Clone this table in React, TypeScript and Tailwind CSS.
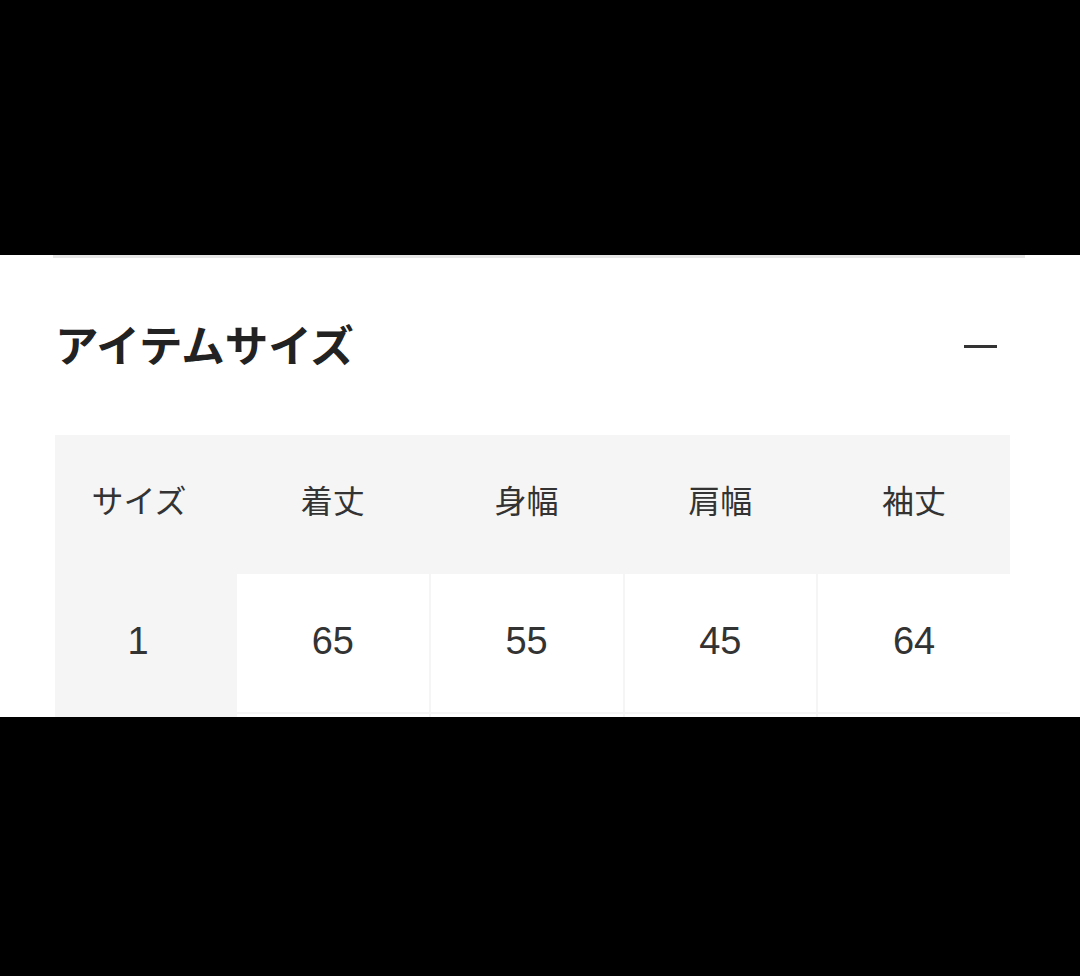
const headers = ["着丈", "身幅", "肩幅", "袖丈"];
const rows = [{ size: "1", values: ["65", "55", "45", "64"] }];

const jp = "font-['Noto_Sans_CJK_JP','Noto_Sans',sans-serif]";

export default function App() {
  return (
    <div className="min-h-[976px] w-[1080px] bg-black">
      <div className="h-[255px]" />

      <section className="h-[462px] overflow-hidden bg-white">
        <div className="ml-[53px] h-[3px] w-[972px] bg-[#e6e6e6]" />

        <div className="ml-[55px] mr-[70px] mt-[64px] flex items-center justify-between">
          <h2 className={`${jp} text-[43.5px] font-bold leading-[44px] text-[#222]`}>
            アイテムサイズ
          </h2>
          <span className="mr-[13px] mt-[5px] block h-[3px] w-[33px] bg-[#333]" />
        </div>

        <div className="ml-[55px] mt-[69px] w-[955px] bg-[#f5f5f5]">
          <div className="grid h-[139px] grid-cols-[180px_repeat(4,1fr)] items-center gap-x-[2px] pb-[12px]">
            <div className={`${jp} pr-[12px] text-center text-[32px] text-[#333]`}>
              サイズ
            </div>
            {headers.map((h) => (
              <div
                key={h}
                className={`${jp} text-center text-[32px] text-[#333]`}
              >
                {h}
              </div>
            ))}
          </div>

          {rows.map((r) => (
            <div
              key={r.size}
              className="mb-[2px] grid h-[138px] grid-cols-[180px_repeat(4,1fr)] gap-x-[2px]"
            >
              <div className="flex items-center justify-center pb-[4px] pr-[14px] font-['Liberation_Sans',sans-serif] text-[38px] text-[#333]">
                {r.size}
              </div>
              {r.values.map((v, i) => (
                <div
                  key={i}
                  className="flex items-center justify-center bg-white pb-[4px] font-['Liberation_Sans',sans-serif] text-[38px] text-[#333]"
                >
                  {v}
                </div>
              ))}
            </div>
          ))}

          {/* next row, only its top edge shows above the black band */}
          <div className="grid h-[20px] grid-cols-[180px_repeat(4,1fr)] gap-x-[2px]">
            <div />
            <div className="bg-white" />
            <div className="bg-white" />
            <div className="bg-white" />
            <div className="bg-white" />
          </div>
        </div>
      </section>

      <div className="h-[259px]" />
    </div>
  );
}
